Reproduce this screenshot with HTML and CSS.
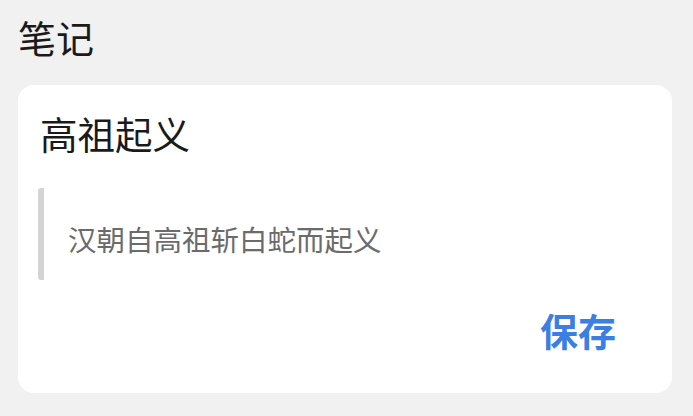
FILE: index.html
```html
<!DOCTYPE html>
<html>

<head>
    <title>笔记</title>
    <meta name="viewport" content="width=device-width, initial-scale=1">
    <link rel="stylesheet" href="styles.css">
</head>

<body>
    <div class="page">
        <div class="page-title">笔记</div>
        <div class="note-card">
            <div class="note-title">高祖起义</div>
            <div class="note-quote">
                <span class="quote-text">汉朝自高祖斩白蛇而起义</span>
            </div>
            <div class="note-actions">
                <button class="save-button">保存</button>
            </div>
        </div>
    </div>
</body>

</html>
```

FILE: styles.css
```css
body {
    font-family: "Noto Sans CJK SC", "Noto Sans", sans-serif;
    margin: 0;
    padding: 0;
    background-color: #f1f1f1;
}

.page {
    display: flex;
    flex-direction: column;
    padding: 14px 21px 0 18px;
}

.page-title {
    font-size: 38px;
    line-height: 46px;
    color: #1a1a1a;
    margin-bottom: 25px;
}

.note-card {
    background-color: #ffffff;
    border-radius: 16px;
    padding: 25px 22px 40px 22px;
    display: flex;
    flex-direction: column;
}

.note-title {
    font-size: 37.5px;
    line-height: 46px;
    color: #1a1a1a;
}

.note-quote {
    display: flex;
    align-items: center;
    margin-top: 32px;
    height: 92px;
    border-left: 6px solid #d4d4d4;
    border-radius: 3px;
    padding: 8px 0 0 24px;
    box-sizing: border-box;
    margin-left: -2px;
}

.quote-text {
    font-size: 28.5px;
    color: #6b6b6b;
}

.note-actions {
    display: flex;
    justify-content: flex-end;
    margin-top: 27px;
}

.save-button {
    font-family: inherit;
    font-size: 38px;
    font-weight: bold;
    line-height: 46px;
    color: #3b7fe2;
    background-color: transparent;
    border: none;
    padding: 0;
    margin-right: 34px;
    cursor: pointer;
}
```
